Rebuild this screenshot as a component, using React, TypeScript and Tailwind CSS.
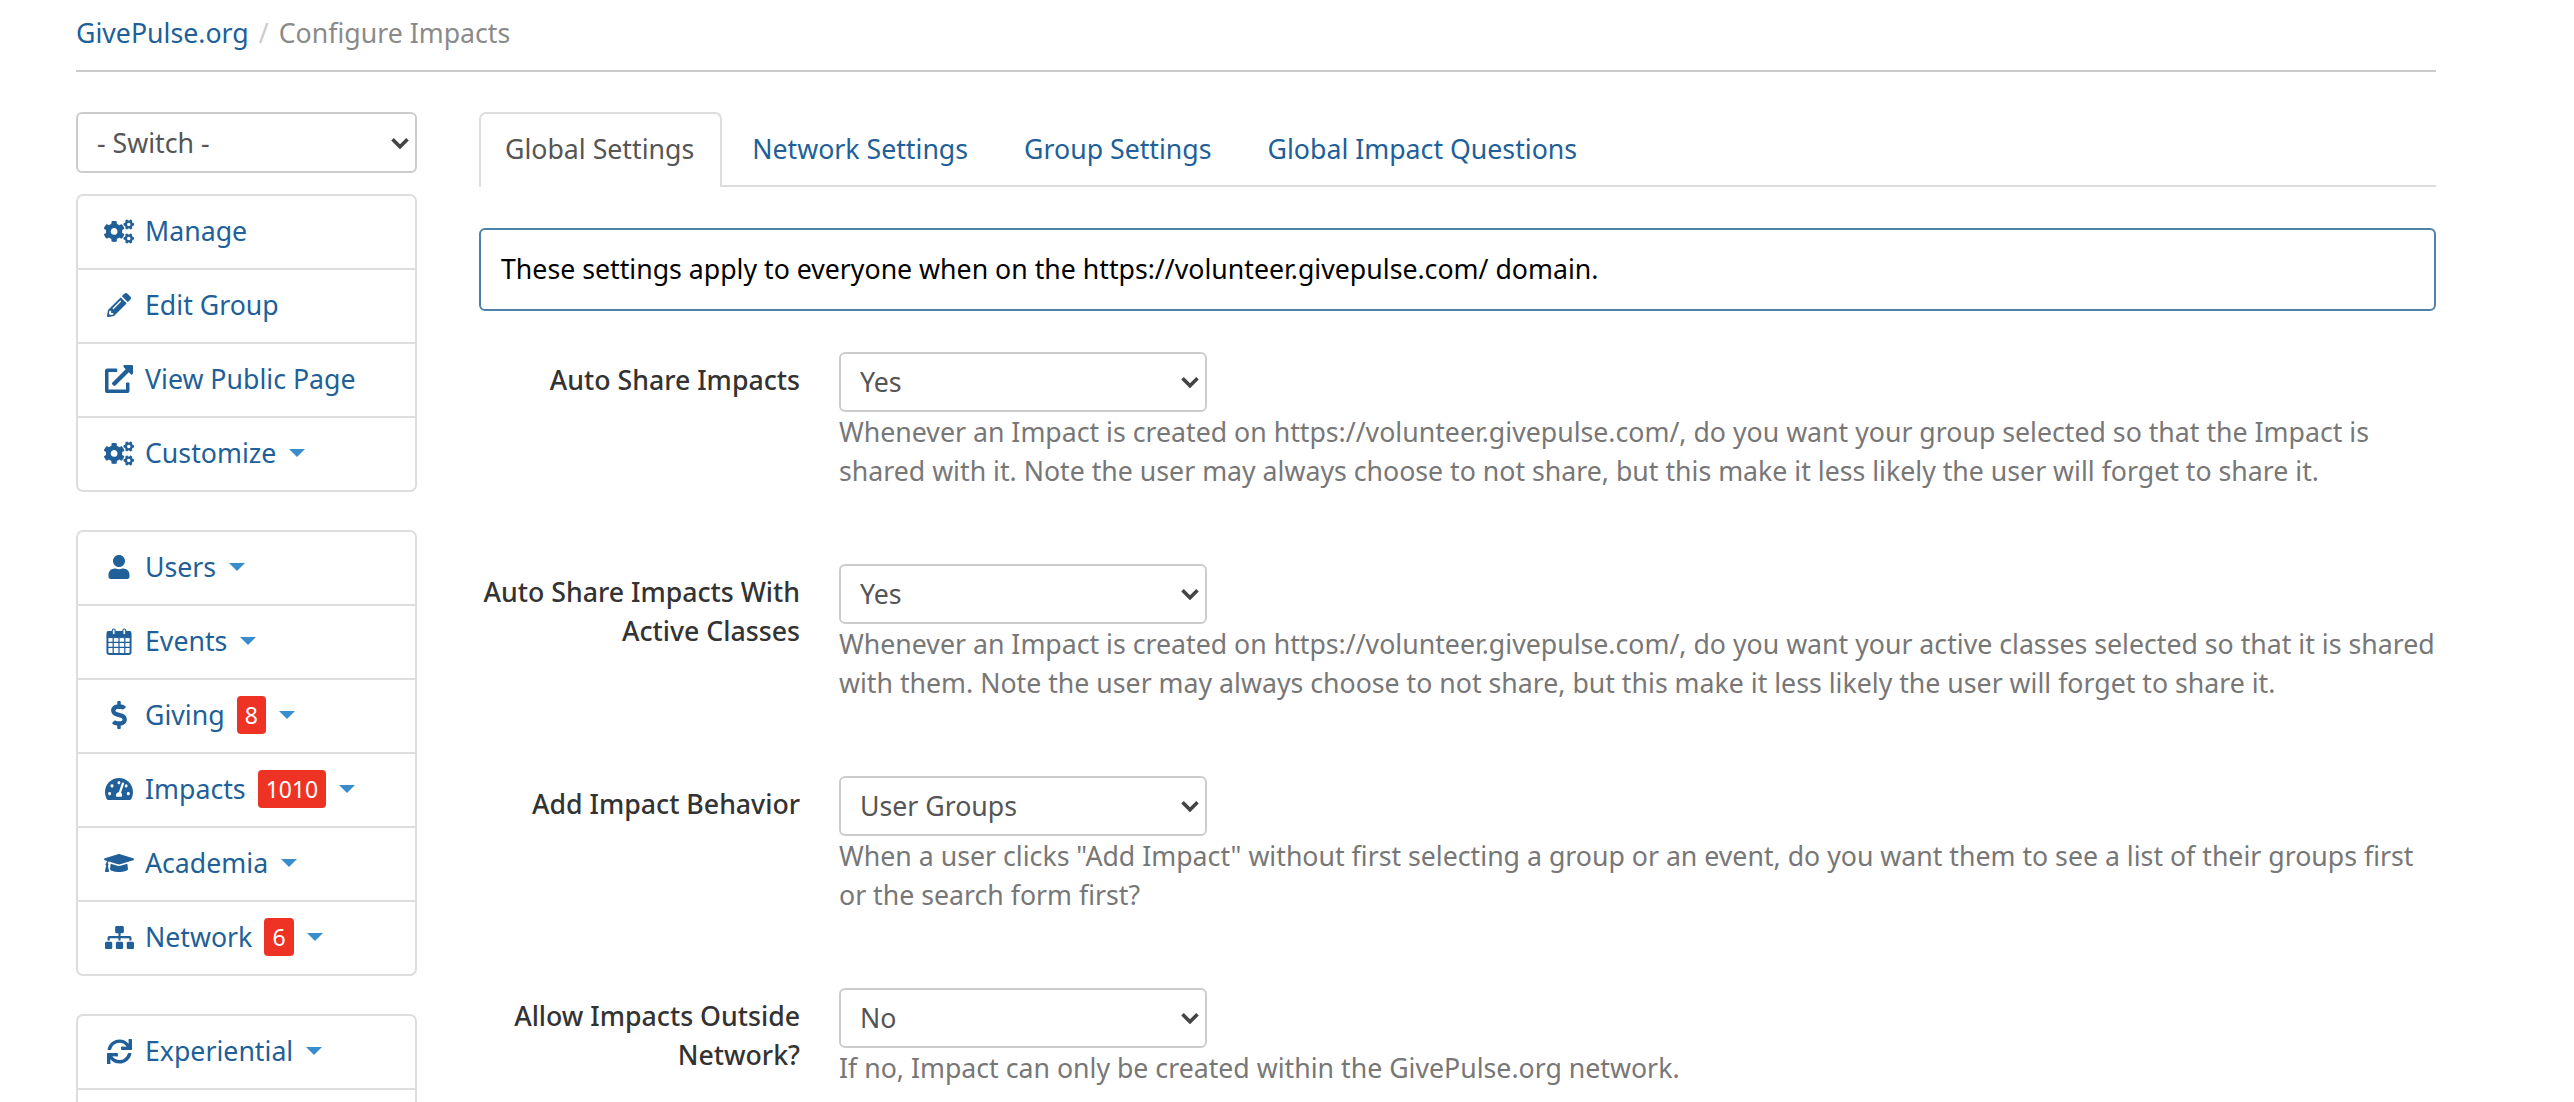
import type { ReactNode } from "react"
import { FaCogs, FaPencilAlt, FaExternalLinkAlt, FaUser, FaDollarSign, FaTachometerAlt, FaGraduationCap, FaSitemap, FaSync } from "react-icons/fa"

function Caret() {
  return <span className="ml-[13px] inline-block h-0 w-0 border-x-[8px] border-t-[8px] border-x-transparent border-t-[#3a8dcc]" />
}

function Calendar() {
  return (
    <svg viewBox="0 0 26 28" className="h-[27px] w-[26px]" fill="none" stroke="currentColor">
      <rect x="1" y="4" width="24" height="23" rx="2" strokeWidth="2" />
      <rect x="1" y="4" width="24" height="6" fill="currentColor" strokeWidth="1" />
      <path d="M7 10v16M13 10v16M19 10v16M1 15h24M1 20h24" strokeWidth="1.3" />
      <rect x="6" y="1" width="3" height="6" rx="1.5" fill="#fff" strokeWidth="1.2" />
      <rect x="17" y="1" width="3" height="6" rx="1.5" fill="#fff" strokeWidth="1.2" />
    </svg>
  )
}

function NavRow({ icon, label, badge, caret }: { icon: ReactNode; label: string; badge?: string; caret?: boolean }) {
  return (
    <div className="flex h-[74px] items-center border-b-2 border-[#ddd] pb-[2px] pl-[26px] text-[#215f99] last:h-[72px] last:border-b-0">
      <span className="flex w-[30px] shrink-0 justify-center">{icon}</span>
      <span className="ml-[11px]">{label}</span>
      {badge && (
        <span className="ml-[12px] flex h-[38px] items-center rounded-[4px] bg-[#ee3224] px-[8px] text-[23px] leading-none text-white">
          {badge}
        </span>
      )}
      {caret && <Caret />}
    </div>
  )
}

function NavCard({ children }: { children: ReactNode }) {
  return <div className="rounded-[7px] border-2 border-[#ddd]">{children}</div>
}

function Select({ value, className }: { value: string; className: string }) {
  return (
    <div className={`relative ${className}`}>
      <select className="h-full w-full appearance-none rounded-[6px] border-2 border-[#ccc] bg-white pl-[19px] text-[#555]" defaultValue={value}>
        <option>{value}</option>
      </select>
      <svg viewBox="0 0 12 8" className="pointer-events-none absolute right-[8px] top-1/2 h-[12px] w-[18px] -translate-y-1/2" fill="none" stroke="#444" strokeWidth="2.4">
        <path d="M1 1.5l5 5 5-5" />
      </svg>
    </div>
  )
}

function FormRow({ label, value, children }: { label: ReactNode; value: string; children: ReactNode }) {
  return (
    <div className="flex h-[212px] gap-[39px]">
      <div className="w-[321px] shrink-0 pt-[8px] text-right font-medium text-[#333]">{label}</div>
      <div>
        <Select value={value} className="h-[60px] w-[368px]" />
        <p className="whitespace-nowrap text-[#777]">{children}</p>
      </div>
    </div>
  )
}

export default function App() {
  return (
    <div className="h-screen overflow-hidden bg-white pl-[76px] font-['Noto_Sans','Liberation_Sans',sans-serif] text-[26.7px] leading-[39.4px]">
      <div className="w-[2360px]">
        {/* Breadcrumb */}
        <div className="flex h-[72px] items-start border-b-2 border-[#ccc] pt-[13px]">
          <span className="text-[#215f99]">GivePulse.org</span>
          <span className="mx-[10px] text-[#ccc]">/</span>
          <span className="text-[#8a8a8a]">Configure Impacts</span>
        </div>

        <div className="mt-[40px] flex gap-[62px]">
          {/* Sidebar */}
          <div className="flex w-[341px] shrink-0 flex-col">
            <Select value="- Switch -" className="mb-[21px] h-[61px]" />
            <div className="flex flex-col gap-[38px]">
              <NavCard>
                <NavRow icon={<FaCogs size={31} />} label="Manage" />
                <NavRow icon={<FaPencilAlt size={24} />} label="Edit Group" />
                <NavRow icon={<FaExternalLinkAlt size={28} />} label="View Public Page" />
                <NavRow icon={<FaCogs size={31} />} label="Customize" caret />
              </NavCard>
              <NavCard>
                <NavRow icon={<FaUser size={24} />} label="Users" caret />
                <NavRow icon={<Calendar />} label="Events" caret />
                <NavRow icon={<FaDollarSign size={28} />} label="Giving" badge="8" caret />
                <NavRow icon={<FaTachometerAlt size={28} />} label="Impacts" badge="1010" caret />
                <NavRow icon={<FaGraduationCap size={36} />} label="Academia" caret />
                <NavRow icon={<FaSitemap size={29} />} label="Network" badge="6" caret />
              </NavCard>
              <NavCard>
                <NavRow icon={<FaSync size={25} />} label="Experiential" caret />
                <NavRow icon={<span />} label="" />
              </NavCard>
            </div>
          </div>

          {/* Main */}
          <div className="min-w-0 flex-1">
            <div className="flex h-[75px] border-b-2 border-[#ddd]">
              <div className="-mb-[2px] rounded-t-[7px] border-2 border-b-0 border-[#ddd] bg-white pl-[24px] pr-[26px] pt-[15px] text-[#555]">Global Settings</div>
              <div className="ml-[5px] px-[25px] pt-[17px] text-[#215f99]">Network Settings</div>
              <div className="ml-[6px] px-[25px] pt-[17px] text-[#215f99]">Group Settings</div>
              <div className="ml-[6px] px-[25px] pt-[17px] text-[#215f99]">Global Impact Questions</div>
            </div>

            <div className="mt-[41px] mb-[41px] flex h-[83px] items-center rounded-[6px] border-2 border-[#4c82aa] px-[20px] pb-[2px] text-black">
              These settings apply to everyone when on the https://volunteer.givepulse.com/ domain.
            </div>

            <FormRow label="Auto Share Impacts" value="Yes">
              Whenever an Impact is created on https://volunteer.givepulse.com/, do you want your group selected so that the Impact is
              <br />
              shared with it. Note the user may always choose to not share, but this make it less likely the user will forget to share it.
            </FormRow>
            <FormRow label={<>Auto Share Impacts With<br />Active Classes</>} value="Yes">
              Whenever an Impact is created on https://volunteer.givepulse.com/, do you want your active classes selected so that it is shared
              <br />
              with them. Note the user may always choose to not share, but this make it less likely the user will forget to share it.
            </FormRow>
            <FormRow label="Add Impact Behavior" value="User Groups">
              When a user clicks "Add Impact" without first selecting a group or an event, do you want them to see a list of their groups first
              <br />
              or the search form first?
            </FormRow>
            <FormRow label={<>Allow Impacts Outside<br />Network?</>} value="No">
              If no, Impact can only be created within the GivePulse.org network.
            </FormRow>
          </div>
        </div>
      </div>
    </div>
  )
}
